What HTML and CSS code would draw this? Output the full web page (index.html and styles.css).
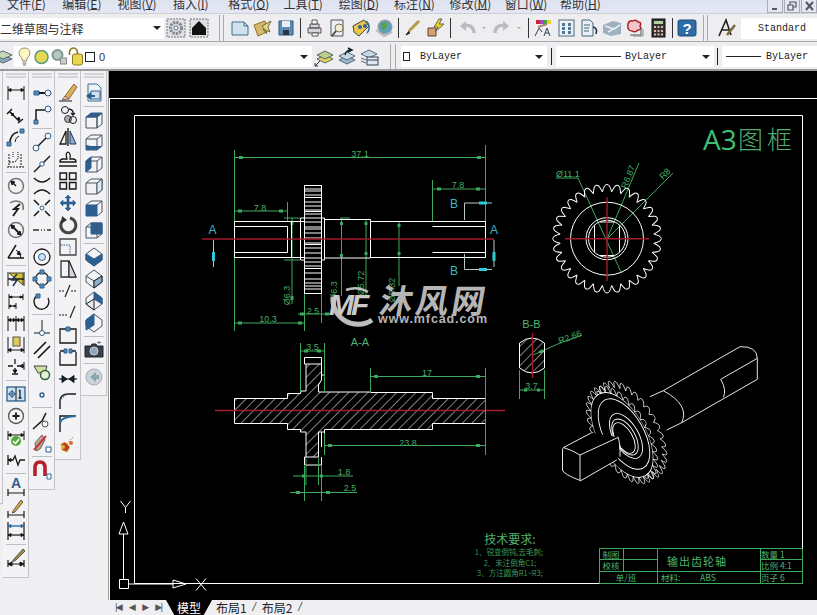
FILE: index.html
```html
<!DOCTYPE html>
<html lang="zh">
<head>
<meta charset="utf-8">
<title>AutoCAD 输出齿轮轴</title>
<link rel="stylesheet" href="styles.css">
</head>
<body>
<svg class="defs" aria-hidden="true">
  <defs>
    <pattern id="hatch" width="6.8" height="6.8" patternUnits="userSpaceOnUse" patternTransform="rotate(45)">
      <line x1="0" y1="0" x2="0" y2="6.8" stroke="#fff" stroke-width="1"/>
    </pattern>
    <path id="tooth" d="M-4.6-46.8Q-3.8-50-2.4-53Q0-55.8 2.4-53Q3.8-50 4.6-46.8"/>
    <g id="teethq">
      <use href="#tooth"/><use href="#tooth" transform="rotate(11.25)"/><use href="#tooth" transform="rotate(22.5)"/><use href="#tooth" transform="rotate(33.75)"/>
      <use href="#tooth" transform="rotate(45)"/><use href="#tooth" transform="rotate(56.25)"/><use href="#tooth" transform="rotate(67.5)"/><use href="#tooth" transform="rotate(78.75)"/>
    </g>
    <g id="teeth">
      <use href="#teethq"/><use href="#teethq" transform="rotate(90)"/><use href="#teethq" transform="rotate(180)"/><use href="#teethq" transform="rotate(270)"/>
    </g>
    <symbol id="grip" viewBox="0 0 20 8"><path d="M0 2H20M0 5H20"/></symbol>
    <symbol id="bar" viewBox="0 0 20 20"><path d="M2 3V17M18 3V17"/></symbol>
  </defs>
</svg>

<header class="menubar">
  <span class="m m1">文件(<u>F</u>)</span><span class="m">编辑(<u>E</u>)</span><span class="m">视图(<u>V</u>)</span><span class="m">插入(<u>I</u>)</span><span class="m">格式(<u>O</u>)</span><span class="m">工具(<u>T</u>)</span><span class="m">绘图(<u>D</u>)</span><span class="m">标注(<u>N</u>)</span><span class="m">修改(<u>M</u>)</span><span class="m">窗口(<u>W</u>)</span><span class="m">帮助(<u>H</u>)</span>
  <div class="winbtns">
    <span class="wb"><svg viewBox="0 0 12 12"><path d="M3 9H8" stroke="#556" stroke-width="2"/></svg></span>
    <span class="wb"><svg viewBox="0 0 12 12"><path d="M2 5H7V10H2ZM4 5V2H10V7H7" fill="none" stroke="#556" stroke-width="1.2"/></svg></span>
    <span class="wb"><svg viewBox="0 0 12 12"><path d="M3 2L10 10M10 2L3 10" stroke="#556" stroke-width="2"/></svg></span>
  </div>
</header>

<div class="toolbar t1">
  <div class="combo c-work"><span class="combo-t">二维草图与注释</span><i class="arrow"></i></div>
  <span class="b"><svg class="ic" viewBox="0 0 20 20"><rect x="1" y="1" width="18" height="18" class="dot"/><circle cx="10" cy="10" r="5.5" class="gr" stroke-width="3"/><circle cx="10" cy="10" r="2" fill="#fff" stroke="#667"/></svg></span>
  <span class="b"><svg class="ic" viewBox="0 0 20 20"><rect x="1" y="1" width="18" height="18" class="dot"/><path d="M3 10L10 3L17 10V17H3Z" fill="#111" stroke="none"/></svg></span>
  <span class="grip"></span>
  <span class="b"><svg class="ic" viewBox="0 0 20 20"><path d="M2 4H14L18 8V17H2Z" fill="#cfe2ee" stroke="#3c6f90"/><path d="M14 4V8H18" stroke="#3c6f90"/></svg></span>
  <span class="b"><svg class="ic" viewBox="0 0 20 20"><path d="M1 7L12 3L14 14L5 18Z" fill="#d9b968" stroke="#8a7430"/><path d="M9 8L18 3L15 9L17 14L12 12Z" fill="#e8d288" stroke="#6f6b3a"/><path d="M10 11L14 16" stroke="#274"/></svg></span>
  <span class="b"><svg class="ic" viewBox="0 0 20 20"><path d="M3 3H17V17H3Z" fill="#5d8db5" stroke="#2f5878"/><path d="M6 3H14V9H6Z" fill="#e8eef4" stroke="none"/><path d="M7 12H13V17H7Z" fill="#24384a" stroke="none"/></svg></span>
  <span class="sep"></span>
  <span class="b"><svg class="ic" viewBox="0 0 20 20"><path d="M5 6H14V10H5ZM3 10H16V15H3Z" fill="#d5d5da" stroke="#555"/><path d="M7 15H13V18H7ZM7 2H12V6H7Z" fill="#fff" stroke="#555"/></svg></span>
  <span class="b"><svg class="ic" viewBox="0 0 20 20"><path d="M3 2H15V18H3Z" fill="#e9f0f5" stroke="#556"/><circle cx="11" cy="10" r="4" fill="#f5efd2" stroke="#775"/><path d="M8 13L4 18" stroke="#543" stroke-width="2"/></svg></span>
  <span class="b"><svg class="ic" viewBox="0 0 20 20"><path d="M2 8L13 2L18 8L8 18L3 14Z" fill="#e8c84a" stroke="#444"/><circle cx="9" cy="9" r="2" fill="#355f9c" stroke="none"/><circle cx="14" cy="8" r="2" fill="#355f9c" stroke="none"/><path d="M15 3C19 6 19 12 16 15" stroke="#3a6a8a" stroke-width="1.5"/></svg></span>
  <span class="b"><svg class="ic" viewBox="0 0 20 20"><circle cx="11" cy="9" r="7" fill="#5f9fbf" stroke="#999"/><path d="M7 5L12 4L14 8L10 12L7 10Z" fill="#5ea04a" stroke="none"/><path d="M2 12L10 18L18 14" stroke="#bbb" stroke-width="2"/></svg></span>
  <span class="sep"></span>
  <span class="b"><svg class="ic" viewBox="0 0 20 20"><path d="M16 3L6 13" stroke="#b89a4a" stroke-width="3"/><path d="M6 13L3 17L7 15" fill="#222" stroke="#222"/></svg></span>
  <span class="b"><svg class="ic" viewBox="0 0 20 20"><path d="M2 10H10V18H2Z" fill="#d9a070" stroke="#543"/><path d="M13 1L8 9H12L9 14L18 6H13L16 1Z" fill="#f0d020" stroke="#665"/></svg></span>
  <span class="sep sp-l"></span>
  <span class="b"><svg class="ic" viewBox="0 0 20 20"><path d="M17 15C17 9 12 6 7 8" stroke="#b9bcc4" stroke-width="3.4"/><path d="M9 3L3 8L9 13Z" fill="#b9bcc4" stroke="none"/></svg></span>
  <span class="bd"><i class="darrow"></i></span>
  <span class="gap2"></span>
  <span class="b"><svg class="ic" viewBox="0 0 20 20"><path d="M3 15C3 9 8 6 13 8" stroke="#b9bcc4" stroke-width="3.4"/><path d="M11 3L17 8L11 13Z" fill="#b9bcc4" stroke="none"/></svg></span>
  <span class="bd"><i class="darrow"></i></span>
  <span class="sep sp-r"></span>
  <span class="b"><svg class="ic" viewBox="0 0 20 20"><path d="M3 2H7V6H3Z" fill="#c23" stroke="none"/><path d="M7 2H11V6H7Z" fill="#a4c" stroke="none"/><path d="M11 2H14V6H11Z" fill="#3a3" stroke="none"/><path d="M14 2H18V6H14Z" fill="#ec3" stroke="none"/><path d="M5 9L14 6" stroke="#a86" stroke-width="2"/><path d="M2 18L6 10L9 14M11 18L14 10L17 18M12 15H16" stroke="#345"/></svg></span>
  <span class="b"><svg class="ic" viewBox="0 0 20 20"><rect x="3" y="2" width="15" height="16" fill="#eef2f5" stroke="#567"/><path d="M6 5H9V8H6ZM12 5H15V8H12ZM6 9H9V12H6ZM12 9H15V12H12ZM6 13H9V16H6ZM12 13H15V16H12Z" fill="#4d7a9c" stroke="none"/></svg></span>
  <span class="b"><svg class="ic" viewBox="0 0 20 20"><path d="M3 2H11L14 5V18H3Z" fill="#e8eff5" stroke="#467"/><path d="M5 7H11M5 10H10M5 13H10" stroke="#467"/><path d="M14 9Q19 10 17 16" stroke="#234" stroke-width="1.6"/></svg></span>
  <span class="b"><svg class="ic" viewBox="0 0 20 20"><path d="M1 7L11 3L19 5V16L9 18L1 15Z" fill="#9cb2c2" stroke="none"/><path d="M3 8L12 11L18 7M6 14L13 10" stroke="#e8eef2" stroke-width="1.6"/></svg></span>
  <span class="b"><svg class="ic" viewBox="0 0 20 20"><path d="M3 6Q4 2 8 3Q11 1 13 4Q17 4 15 8Q17 12 13 12Q10 15 7 13Q2 13 3 6Z" fill="#f2c5ce" stroke="#a22" stroke-width="1.5"/><path d="M16 9V17H5" stroke="#555"/><path d="M18 11V18H8" stroke="#888"/></svg></span>
  <span class="b"><svg class="ic" viewBox="0 0 20 20"><rect x="4" y="1" width="13" height="18" fill="#333" stroke="#111"/><rect x="6" y="3" width="9" height="3" fill="#b4d0a0" stroke="none"/><path d="M6 8H8V10H6ZM9.5 8H11.500V10H9.500ZM13 8H15V10H13ZM6 12H8V14H6ZM9.500 12H11.500V14H9.500ZM13 12H15V14H13ZM6 15.500H8V17.500H6ZM9.500 15.500H11.500V17.500H9.500ZM13 15.500H15V17.500H13Z" fill="#e6b8a0" stroke="none"/></svg></span>
  <span class="sep"></span>
  <span class="b"><svg class="ic" viewBox="0 0 20 20"><rect x="1" y="2" width="18" height="16" rx="2" fill="#2d6ea8" stroke="#1d4a78"/><text class="help" x="10" y="15.500">?</text></svg></span>
  <span class="grip g2"></span>
  <span class="b"><svg class="ic" viewBox="0 0 20 20"><path d="M2 18L9 2L14 17M5 12H13" stroke="#222" stroke-width="1.6"/><path d="M18 7L10 17" stroke="#7d6a3a" stroke-width="2.600"/></svg></span>
  <div class="combo c-style"><span class="mono">Standard</span></div>
</div>

<div class="toolbar t2">
  <span class="b-clip"><svg class="ic layers-clip" viewBox="0 0 20 20"><path d="M1 12L10 8L19 12L10 16Z" fill="#8ea8b8" stroke="#567"/><path d="M1 8L10 4L19 8L10 12Z" fill="#c9d8b0" stroke="#567"/></svg></span>
  <div class="combo c-layer">
    <svg class="ic sm" viewBox="0 0 16 20"><path d="M8 1C3 1 2 5 3 8C4 10 6 11 6 14H10C10 11 12 10 13 8C14 5 13 1 8 1Z" fill="#fff5c0" stroke="#887"/><path d="M6 16H10M6.500 18H9.500" stroke="#666"/></svg>
    <svg class="ic sm" viewBox="0 0 16 20"><circle cx="8" cy="10" r="6.500" fill="#e6d650" stroke="#5a9a86" stroke-width="1.500"/></svg>
    <svg class="ic sm" viewBox="0 0 16 20"><circle cx="7" cy="8" r="5" fill="#b8c4c0" stroke="#7a9a90" stroke-width="2"/><rect x="10" y="11" width="6" height="6" fill="#ccc" stroke="#888"/></svg>
    <svg class="ic sm" viewBox="0 0 16 20"><path d="M2 8V5Q3 1 6 1Q9 1 10 5V8" stroke="#8a7a20" stroke-width="1.600"/><rect x="5" y="7" width="10" height="11" rx="2" fill="#e9d64c" stroke="#887a20"/></svg>
    <i class="swatch"></i><span class="layer-name">0</span><i class="arrow a-end"></i>
  </div>
  <span class="b"><svg class="ic" viewBox="0 0 20 20"><path d="M3 12L11 8L19 12L11 16Z" fill="#e5d25a" stroke="#566"/><path d="M3 8L11 4L19 8L11 12Z" fill="#b8d08a" stroke="#566"/><path d="M1 19L6 14M1 19H4M1 19V16" stroke="#234"/></svg></span>
  <span class="b"><svg class="ic" viewBox="0 0 20 20"><path d="M2 13L10 9L18 13L10 17Z" fill="#9fb9cc" stroke="#567"/><path d="M2 9L10 5L18 9L10 13Z" fill="#c6d8e4" stroke="#567"/><path d="M8 8Q9 3 14 3M11 1L15 3L11 5" stroke="#123" stroke-width="1.500"/></svg></span>
  <span class="b"><svg class="ic" viewBox="0 0 20 20"><path d="M1 7L9 3L17 7L9 11Z" fill="#c6d8e4" stroke="#567"/><path d="M1 11L6 13M1 14L6 16" stroke="#567"/><rect x="7" y="10" width="11" height="8" fill="#dfe9ef" stroke="#345"/><path d="M7 13H18" stroke="#345"/></svg></span>
  <span class="grip g3"></span>
  <div class="combo c-color"><i class="swatch s2"></i><span class="mono bl-t">ByLayer</span><i class="arrow a-end"></i></div>
  <span class="dark d1"></span>
  <div class="combo c-line"><i class="ln ln1"></i><span class="mono bl-t">ByLayer</span><i class="arrow a-end"></i></div>
  <span class="dark d2"></span>
  <div class="combo c-line2"><i class="ln ln2"></i><span class="mono bl-t">ByLayer</span></div>
</div>

<main class="workspace">
  <aside class="dock">
    <div class="col c0"></div>

    <div class="col c1">
      <svg class="grp"><use href="#grip"/></svg>
      <svg class="ic" viewBox="0 0 20 20"><use href="#bar"/><path d="M2 7H18"/><path d="M2 7L5 5.500V8.500ZM18 7L15 5.500V8.500Z" fill="#111"/></svg>
      <svg class="ic" viewBox="0 0 20 20"><path d="M4 7L14 17M1 9L6 4M12 18L17 14" stroke-width="1.500"/><path d="M5 8L8 9L6 11ZM14 15L11 14L13 12Z" fill="#111"/></svg>
      <svg class="ic" viewBox="0 0 20 20"><path d="M4 16Q4 7 12 5" stroke-width="1.500"/><path d="M9 15Q9 11 13 9"/><path d="M1 15H5V19H1ZM14 2H18V6H14Z" class="bl"/></svg>
      <svg class="ic" viewBox="0 0 20 20"><path d="M3 5V18M15 5V18M3 13L9 13L13 8M1 18H19" stroke-dasharray="2 1"/><path d="M7 3V8M12 3V8" stroke-dasharray="1 1"/></svg>
      <span class="hr"></span>
      <svg class="ic" viewBox="0 0 20 20"><circle cx="10" cy="10" r="7.500" stroke-width="1.500" stroke="#777"/><path d="M10 10L5 5" stroke-width="1.500"/><path d="M5 5L9 6L6 9Z" fill="#123"/></svg>
      <svg class="ic" viewBox="0 0 20 20"><path d="M4 5Q10 1 16 5Q18 8 17 12" stroke="#777" stroke-width="1.500"/><path d="M14 6L8 11L12 11L7 18" stroke-width="1.800"/></svg>
      <svg class="ic" viewBox="0 0 20 20"><circle cx="10" cy="10" r="7.500" stroke-width="1.500" stroke="#777"/><path d="M5 5L15 15" stroke-width="1.800"/><path d="M5 5L9 6L6 9ZM15 15L11 14L14 11Z" fill="#123"/></svg>
      <svg class="ic" viewBox="0 0 20 20"><path d="M2 16H18M2 16L10 3" stroke-width="1.500"/><path d="M10 8Q15 11 15 16"/><path d="M13 9L15 13L11 12Z" fill="#123"/></svg>
      <span class="hr"></span>
      <svg class="ic" viewBox="0 0 20 20"><use href="#bar"/><path d="M3 4L17 16V4Z" fill="#d8c42c" stroke="#443"/><path d="M2 10H18" stroke-width="1.500"/><path d="M11 5L6 11L11 11L7 17" stroke="#235" stroke-width="1.500"/></svg>
      <svg class="ic" viewBox="0 0 20 20"><path d="M3 3V18M17 3V9M10 12V18M3 6H17M3 15H10"/><path d="M3 6L6 5V7ZM17 6L14 5V7ZM3 15L5 14V16ZM10 15L8 14V16Z" fill="#111"/></svg>
      <svg class="ic" viewBox="0 0 20 20"><path d="M2 3V18M10 3V18M18 3V18M2 7H18"/><path d="M2 7L5 5.500V8.500ZM10 7L7 5.500V8.500ZM10 7L13 5.500V8.500ZM18 7L15 5.500V8.500Z" fill="#111"/></svg>
      <svg class="ic" viewBox="0 0 20 20"><rect x="7" y="2" width="7" height="9" fill="#e2c95c" stroke="#554"/><path d="M2 2V18M18 2V18M2 15H18"/><path d="M2 15L5 13.500V16.500ZM18 15L15 13.500V16.500Z" fill="#111"/></svg>
      <svg class="ic" viewBox="0 0 20 20"><path d="M9 2V7M9 11V16M6 17H12M2 9H7M11 9H18" stroke-width="1.300"/><path d="M18 5V13"/><path d="M14 9L17 7V11Z" fill="#235"/><path d="M9 16L7 13H11Z" fill="#111"/></svg>
      <span class="hr"></span>
      <svg class="ic" viewBox="0 0 20 20"><rect x="1" y="3" width="18" height="14" fill="#cfe0ee" stroke="#2c5f90" stroke-width="1.300"/><path d="M10 3V17"/><circle cx="6" cy="10" r="2.500" stroke="#2c5f90"/><path d="M6 6V14M2 10H10" stroke="#2c5f90"/><path d="M14 6V14M12.500 14H15.500M13 7L14 6" stroke="#123" stroke-width="1.300"/></svg>
      <svg class="ic" viewBox="0 0 20 20"><circle cx="10" cy="10" r="7.500" stroke="#555" stroke-width="1.300"/><path d="M6.500 10H13.500M10 6.500V13.500" stroke-width="1.800"/></svg>
      <svg class="ic" viewBox="0 0 20 20"><path d="M2 3V12M18 3V12M2 7H18"/><path d="M2 7L5 5.500V8.500ZM18 7L15 5.500V8.500Z" fill="#111"/><circle cx="10" cy="13" r="5" fill="#55a83a" stroke="none"/><path d="M7 13L9.500 15.500L13 11" stroke="#fff" stroke-width="1.500"/></svg>
      <svg class="ic" viewBox="0 0 20 20"><path d="M2 5V15M2 10H7L9 6L12 15L14 10H19" stroke-width="1.300"/><path d="M2 10L5 8.500V11.500Z" fill="#111"/></svg>
      <span class="hr"></span>
      <svg class="ic" viewBox="0 0 20 20"><text class="dimA" x="10" y="11">A</text><path d="M2 12V19M18 12V19M2 16H18" stroke-width="1.200"/></svg>
      <svg class="ic" viewBox="0 0 20 20"><path d="M15 1L7 12L6 14L9 13L17 3Z" fill="#cdb03a" stroke="#655"/><path d="M2 12V19M18 12V19M2 16H18" stroke-width="1.200"/></svg>
      <svg class="ic" viewBox="0 0 20 20"><path d="M2 1V19M18 1V19" stroke-width="1.200"/><path d="M2 5H18" stroke="#2c6ea0" stroke-width="1.400"/><path d="M2 14H18" stroke-width="1.200"/><path d="M2 5L5 3.500V6.500ZM18 5L15 3.500V6.500Z" fill="#2c6ea0" stroke="#2c6ea0"/><path d="M2 14L5 12.500V15.500ZM18 14L15 12.500V15.500Z" fill="#111"/></svg>
      <span class="hr"></span>
      <svg class="ic" viewBox="0 0 20 20"><path d="M17 1L8 11L6 14L10 12L19 3Z" fill="#a88a4a" stroke="#554"/><path d="M2 12V19M18 12V19M2 16H18" stroke-width="1.200"/><path d="M2 16L6 14V18ZM18 16L14 14V18Z" fill="#111"/></svg>
    </div>

    <div class="col c2">
      <svg class="grp"><use href="#grip"/></svg>
      <svg class="ic" viewBox="0 0 20 20"><path d="M2 8H7V12H2Z" class="bl"/><path d="M7 10H13" stroke-width="2"/><circle cx="16" cy="10" r="3" stroke="#2c5f90"/></svg>
      <svg class="ic" viewBox="0 0 20 20"><path d="M2 15H6V19H2Z" class="bl"/><path d="M4 15V5H13" stroke-width="1.500"/><circle cx="16" cy="4" r="3" stroke="#2c5f90"/></svg>
      <span class="hr"></span>
      <svg class="ic" viewBox="0 0 20 20"><circle cx="4" cy="16" r="3" stroke="#2c5f90"/><circle cx="16" cy="4" r="3" stroke="#2c5f90"/><path d="M6 14L14 6" stroke-width="1.500"/></svg>
      <svg class="ic" viewBox="0 0 20 20"><path d="M2 18L18 2" stroke-width="1.500"/><circle cx="10" cy="10" r="2.200" stroke="#2c5f90" fill="#fff"/></svg>
      <svg class="ic" viewBox="0 0 20 20"><path d="M2 2Q10 10 18 2M2 18Q10 10 18 18" stroke-width="1.600"/></svg>
      <svg class="ic" viewBox="0 0 20 20"><path d="M2 2L7 7M13 13L18 18M18 2L13 7M7 13L2 18" stroke-width="1.600"/><circle cx="10" cy="10" r="2" stroke="#2c5f90"/></svg>
      <svg class="ic" viewBox="0 0 20 20"><path d="M1 10H7M9 10H10M12 10H13M15 10H19" stroke-width="1.600" stroke="#333"/></svg>
      <span class="hr"></span>
      <svg class="ic" viewBox="0 0 20 20"><circle cx="10" cy="10" r="8" stroke-width="1.300" fill="#f8f8f8"/><circle cx="10" cy="10" r="3.500" stroke="#2c6ea0" fill="#cfe0ee"/></svg>
      <svg class="ic" viewBox="0 0 20 20"><circle cx="10" cy="10" r="6.500" stroke-width="1.300"/><path d="M8 1H12V5H8ZM8 15H12V19H8ZM1 8H5V12H1ZM15 8H19V12H15Z" fill="#5a8ab8" stroke="#2c5f90"/></svg>
      <svg class="ic" viewBox="0 0 20 20"><path d="M6 4A7.500 7.500 0 1 0 16 7" stroke-width="1.400"/><path d="M4 3H8V7H4Z" fill="#5a8ab8" stroke="#2c5f90"/></svg>
      <span class="hr"></span>
      <svg class="ic" viewBox="0 0 20 20"><path d="M10 2V15M2 15H18"/><circle cx="10" cy="15" r="2.500" stroke="#2c5f90" fill="#fff"/></svg>
      <svg class="ic" viewBox="0 0 20 20"><path d="M2 14L14 2M6 18L18 6" stroke-width="1.700"/></svg>
      <svg class="ic" viewBox="0 0 20 20"><path d="M2 4H15L13 11H6Z" fill="#cfe0a0" stroke="#444"/><circle cx="13" cy="13" r="4.500" stroke="#2c6040" stroke-width="1.500" fill="#e7f0d0"/></svg>
      <svg class="ic" viewBox="0 0 20 20"><circle cx="10" cy="11" r="2" stroke="#2c5f90" stroke-width="1.300"/></svg>
      <span class="hr"></span>
      <svg class="ic" viewBox="0 0 20 20"><path d="M1 18L11 9M14 2L10 10" stroke-width="1.600"/><circle cx="13" cy="13" r="3" stroke="#555"/></svg>
      <svg class="ic" viewBox="0 0 20 20"><path d="M3 10L10 2L13 7L8 16L4 18Z" fill="#b8a8a0" stroke="#665"/><path d="M2 17L14 3" stroke="#c33" stroke-width="2"/><path d="M14 14H19V19H14Z" fill="#fff" stroke="#2c5f90"/></svg>
      <span class="hr"></span>
      <svg class="ic" viewBox="0 0 20 20"><path d="M3 16V8Q3 2 8 2Q13 2 13 8V16" stroke="#b5202c" stroke-width="3.600"/><path d="M15 14H19V19H15Z" stroke="#2c6ea0" fill="#fff"/></svg>
    </div>

    <div class="col c3">
      <svg class="grp"><use href="#grip"/></svg>
      <svg class="ic" viewBox="0 0 20 20"><path d="M16 1L7 13L11 16L19 4Z" fill="#d8b24a" stroke="#866"/><path d="M7 13L4 17L11 16Z" fill="#e8c0b0" stroke="#866"/><path d="M1 18H14"/></svg>
      <svg class="ic" viewBox="0 0 20 20"><circle cx="7" cy="5" r="3.500"/><circle cx="10" cy="14" r="3.500" fill="#aaa" stroke="#444"/><circle cx="15" cy="15" r="3.500"/><path d="M11 4Q16 5 15 9M13 8L15 10L17 8" stroke="#123" stroke-width="1.400"/></svg>
      <svg class="ic" viewBox="0 0 20 20"><path d="M10 1V19" stroke-width="1.400"/><path d="M8 4L2 17H8Z" stroke-width="1.300"/><path d="M12 4L18 17H12Z" fill="#8ab0d0" stroke="#235"/></svg>
      <svg class="ic" viewBox="0 0 20 20"><path d="M2 13Q2 10 5 10H9Q7 4 10 3Q13 4 12 10H15Q18 10 18 13H2Z" stroke-width="1.300"/><path d="M1 17H19" stroke-width="1.500"/></svg>
      <svg class="ic" viewBox="0 0 20 20"><path d="M2 2H8.500V8.500H2ZM11.500 2H18V8.500H11.500ZM2 11.500H8.500V18H2ZM11.500 11.500H18V18H11.500Z" stroke-width="1.400"/></svg>
      <svg class="ic" viewBox="0 0 20 20"><path d="M10 2L13 5H11V9H15V7L18 10L15 13V11H11V15H13L10 18L7 15H9V11H5V13L2 10L5 7V9H9V5H7Z" fill="#2c5f90" stroke="#2c5f90" stroke-width=".6"/></svg>
      <svg class="ic" viewBox="0 0 20 20"><path d="M12 3A7.500 7.500 0 1 1 5 5" stroke="#444" stroke-width="3"/><path d="M4 1L9 5L3 9Z" fill="#333" stroke="none"/></svg>
      <svg class="ic" viewBox="0 0 20 20"><path d="M2 2H18V18H2Z" stroke="#444" stroke-width="1.300"/><path d="M3 8H12V17" stroke="#2c5f90" stroke-dasharray="1.500 1"/></svg>
      <svg class="ic" viewBox="0 0 20 20"><path d="M3 2V18H11V2ZM11 2L18 18H11" stroke="#333" stroke-width="1.300"/><path d="M11 2L18 18H11Z" fill="#cfd8e0"/></svg>
      <svg class="ic" viewBox="0 0 20 20"><path d="M1 10H7M13 10H19" stroke-dasharray="2 1"/><path d="M12 4L7 16" stroke="#222" stroke-width="1.200"/></svg>
      <svg class="ic" viewBox="0 0 20 20"><path d="M1 12H10" stroke-dasharray="2 1"/><path d="M17 3L12 15" stroke="#222" stroke-width="1.200"/></svg>
      <svg class="ic" viewBox="0 0 20 20"><path d="M2 4H18V18H2Z" stroke-width="1.300"/><path d="M8 2H12V6H8Z" fill="#5a8ab8" stroke="#2c5f90"/></svg>
      <svg class="ic" viewBox="0 0 20 20"><path d="M2 5V18H18V5" stroke-width="1.300"/><path d="M2 4H7M13 4H18" stroke-width="1.300"/><path d="M6 2H9V6H6ZM11 2H14V6H11Z" fill="#5a8ab8" stroke="#2c5f90"/></svg>
      <svg class="ic" viewBox="0 0 20 20"><path d="M1 10H19" stroke-width="1.200"/><path d="M9 10L4 6.500V13.500ZM11 10L16 6.500V13.500Z" fill="#123"/></svg>
      <svg class="ic" viewBox="0 0 20 20"><path d="M2 18V9Q3 3 10 3H18" stroke-width="1.400"/><path d="M3 8Q5 5 10 3" stroke="#2c6ea0" stroke-dasharray="1.500 1" stroke-width="1.500"/></svg>
      <svg class="ic" viewBox="0 0 20 20"><path d="M2 19V3H18" stroke-width="1.400"/><path d="M2 10Q3 4 18 3" stroke="#2c6ea0" stroke-width="2"/></svg>
      <svg class="ic" viewBox="0 0 20 20"><path d="M15 2L9 9" stroke="#999" stroke-dasharray="1.500 1"/><path d="M3 9L7 7L12 12L9 17L4 15Z" fill="#b5421e" stroke="#e8b040"/><circle cx="5" cy="12" r="2" fill="#e8b040" stroke="none"/><circle cx="13" cy="8" r="2" fill="#d86a2e" stroke="none"/></svg>
    </div>

    <div class="col c4">
      <svg class="grp"><use href="#grip"/></svg>
      <svg class="ic" viewBox="0 0 20 20"><path d="M4 1H13L17 5V18H4Z" fill="#eef3f6" stroke="#3c6f90"/><path d="M7 8H16V16H7Z" fill="#cfe0ee" stroke="#2c5f90"/><path d="M2 13L7 9V12H11V14H7V17Z" fill="#2c5f90" stroke="none"/></svg>
      <span class="hr"></span>
      <svg class="ic" viewBox="0 0 20 20"><path d="M2 7L7 3H18L13 7Z" fill="#2c5f90" stroke="#2c5f90"/><path d="M2 7H13V18H2ZM13 7L18 3V14L13 18Z" stroke="#456"/></svg>
      <svg class="ic" viewBox="0 0 20 20"><path d="M2 7L7 3H18V14L13 18H2Z" stroke="#456"/><path d="M2 7H13V18M13 7L18 3"  stroke="#456"/><path d="M2 13L7 14H18L13 18H2Z" fill="#2c5f90" stroke="none"/></svg>
      <svg class="ic" viewBox="0 0 20 20"><path d="M2 7L7 3H18V14L13 18H2Z" stroke="#456"/><path d="M2 7L7 3V14L2 18Z" fill="#2c5f90" stroke="#2c5f90"/><path d="M2 7H13V18M13 7L18 3" stroke="#456"/></svg>
      <svg class="ic" viewBox="0 0 20 20"><path d="M2 7L7 3H18V14L13 18H2Z" stroke="#456"/><path d="M2 7H13V18M13 7L18 3" stroke="#456"/><path d="M13 7L18 3V14L13 18Z" fill="#dfe9f2" stroke="#456"/></svg>
      <svg class="ic" viewBox="0 0 20 20"><path d="M2 7H13V18H2Z" fill="#2c5f90" stroke="#2c5f90"/><path d="M2 7L7 3H18V14L13 18M13 7L18 3" stroke="#456"/></svg>
      <svg class="ic" viewBox="0 0 20 20"><path d="M2 7L7 3H18V14L13 18H2Z" stroke="#456"/><path d="M7 3H18V14H7Z" fill="#2c5f90" stroke="#2c5f90"/><path d="M2 7H13V18" stroke="#456"/></svg>
      <span class="hr"></span>
      <svg class="ic" viewBox="0 0 20 20"><path d="M10 1L18 7V13L10 19L2 13V7Z" stroke="#456"/><path d="M2 7L10 12L18 7V13L10 19L2 13Z" fill="#2c5f90" stroke="#2c5f90"/></svg>
      <svg class="ic" viewBox="0 0 20 20"><path d="M10 1L18 7V13L10 19L2 13V7Z" stroke="#456"/><path d="M2 7L10 12L18 7M10 12V19" stroke="#456"/><path d="M10 12L18 7V13L10 19Z" fill="#8ab0d0"/></svg>
      <svg class="ic" viewBox="0 0 20 20"><path d="M10 1L18 7V13L10 19L2 13V7Z" stroke="#456"/><path d="M10 1L18 7V13L10 8Z" fill="#2c5f90" stroke="#2c5f90"/><path d="M2 13L10 8V19Z" fill="#dfe9f2"/></svg>
      <svg class="ic" viewBox="0 0 20 20"><path d="M10 1L18 7V13L10 19L2 13V7Z" stroke="#456"/><path d="M2 7L10 1V12L2 17Z" fill="#2c5f90" stroke="#2c5f90"/></svg>
      <span class="hr"></span>
      <svg class="ic" viewBox="0 0 20 20"><path d="M1 6H7L8 4H12L13 6H19V17H1Z" fill="#3a4048" stroke="#223"/><circle cx="10" cy="11" r="4" fill="#8ea4b8" stroke="#ccd"/><path d="M15 1L15 4M13 2.500H17" stroke="#778"/></svg>
      <span class="hr"></span>
      <svg class="ic" viewBox="0 0 20 20"><circle cx="10" cy="10" r="8" fill="#ccd4d8" stroke="#aab"/><path d="M12 5V15L6 10Z" fill="#8ca4b0" stroke="none"/><path d="M11 8H15V12H11Z" fill="#8ca4b0" stroke="none"/></svg>
    </div>
  </aside>

  <section class="viewport">
    <svg class="drawing" viewBox="109 71 708 529" preserveAspectRatio="none">
      <!-- paper and frame -->
      <path class="w" d="M109.500 99V600M109 98.500H817M134.500 115.500H802.500V583.500H134.500Z"/>

      <!-- front view -->
      <g class="dim">
        <path d="M234.500 150V331M485.500 145V228M234 157.500H485M287.500 202V222M234 211H288M432.500 180V222M432 189H485"/>
        <path d="M284 218H300M284 260H300M292 218V304M304.500 293V331M234 323H304M321.500 293V323M298 314H332"/>
        <path d="M341.500 218V296M366 219V298M399 221V286M340 218H350"/>
        <path d="M578 178H556M578 178L621 272M607 239L639 163M607 239L673 173"/>
      </g>
      <path class="ar" d="M239 157.500H243M477 157.500H481M238 211H242M279 211H283M437 189H441M476 189H480M238 323H242M298 323H302M300 314H304M325 314H329M292 221V225M292 300V296M341.500 222V225M341.500 254V257M366 222V225M366 252V255M399 224V227M399 252V255"/>
      <g class="w">
        <path d="M234.500 221.500H304M234.500 257.500H304M234.500 221.500V257.500M234.500 226.500H287.500V252.500H234.500M291.500 221.500V257.500"/>
        <path d="M300.500 218V260H304.500V218ZM321.500 218V260H324.500V218ZM324.500 219.500H370.500V258H324.500M370.500 221.500H485.500V257.500H370.500M432.500 226.500H485.500V252.500H432.500M485.500 221.500V257.500"/>
        <rect x="304.500" y="185.500" width="17" height="108"/>
        <path d="M304 189H322M304 191H322M304 195H322M304 197.500H322M304 202H322M304 206H322M304 210H322M304 211.500H322M304 214H322M304 218H322M304 222H322M304 227H322M304 229H322M304 233H322M304 238H322M304 243H322M304 244.500H322M304 248H322M304 253H322M304 258H322M304 262H322M304 266H322M304 268.500H322M304 273H322M304 279H322M304 283H322M304 286H322M304 289H322"/>
      </g>
      <path class="rd" d="M202 239H494"/>
      <g class="cy">
        <path d="M464.500 220V203H492M464.500 254V269.500H492M213.500 240V267M494 240V267"/>
      </g>
      <path class="car" d="M479 203H487M479 269.500H487M213.500 252V261M494 252V261"/>
      <text class="t-cy" x="212.500" y="234">A</text>
      <text class="t-cy" x="494" y="234">A</text>
      <text class="t-cy" x="454" y="208">B</text>
      <text class="t-cy" x="454" y="275">B</text>
      <text class="t-d" x="360" y="157">37.1</text>
      <text class="t-d" x="260" y="211">7.8</text>
      <text class="t-d" x="458" y="188">7.8</text>
      <text class="t-d" x="268" y="322">10.3</text>
      <text class="t-d" x="313" y="314">2.5</text>
      <text class="t-d" transform="translate(290 295.500) rotate(-90)">Ø6.3</text>
      <text class="t-d" transform="translate(337 291) rotate(-90)">Ø6.3</text>
      <text class="t-d" transform="translate(364 283) rotate(-90)">Ø5.72</text>
      <text class="t-d" transform="translate(395 290) rotate(-90)">Ø5.32</text>
      <text class="t-h" x="360" y="346">A-A</text>

      <!-- watermark -->
      <g class="wm">
        <path class="wm-arc" d="M333 297A25 25 0 0 0 372 320"/>
        <path class="wm-arc thin" d="M346 290A25 25 0 0 1 368 292"/>
        <text class="wm-mf" x="329" y="315">MF</text>
        <text class="wm-cn" transform="translate(378 313) skewX(-10)">沐风网</text>
        <text class="wm-url" x="378" y="323" textLength="109">www.mfcad.com</text>
      </g>

      <!-- section A-A -->
      <path class="hatched" d="M234.500 398.500H287.500V393.500H300.500V391H306V364H321.500V380L318.500 385V392H370V392.500H432.500V398.500H485.500V423.500H432.500V429.500H324.500V432H318.500V457H306V432H300.500V429.500H287.500V423.500H234.500Z"/>
      <path class="w" d="M304.500 357.500H321.500V364M304.500 357.500V364H306M304.500 465H321.500V457M304.500 465V457H306M321.500 380V375H324.500V392M321.500 432V447M324.500 432V447"/>
      <path class="rd" d="M215 410.500H505"/>
      <g class="dim">
        <path d="M300.500 343V392M324.500 343V392M300 351H325M370.500 368V393M485.500 368V455M370 376.500H485M324.500 433V455M324 445.500H485"/>
        <path d="M293 476H353M306 458V485M318.500 458V485M290 492.500H357M304.500 466V501M321.500 466V501"/>
        <path d="M519.500 370V399M544.500 370V399M519 390H545M533 355L560 343L582 335"/>
      </g>
      <path class="ar" d="M304 351H308M317 351H321M374 376.500H378M476 376.500H480M328 445.500H332M476 445.500H480M302 476H305M320 476H323M296 492.500H300M326 492.500H330M524 390H527M537 390H540M539 352.500L543 350.500"/>
      <text class="t-d" x="312.500" y="350">3.5</text>
      <text class="t-d" x="427" y="376">17</text>
      <text class="t-d" x="408" y="446">23.8</text>
      <text class="t-d" x="344" y="475">1.8</text>
      <text class="t-d" x="350" y="491">2.5</text>
      <text class="t-d" x="531.500" y="389">3.7</text>

      <!-- section B-B -->
      <text class="t-h" x="531.500" y="328">B-B</text>
      <path class="hatched" d="M519.500 343Q532 333 544.500 343V368Q532 378 519.500 368Z"/>
      <path class="rd" d="M532.500 333V378"/>
      <text class="t-d" transform="translate(571 340) rotate(-20)">R2.66</text>

      <!-- gear end view -->
      <g class="w thin-w">
        <use href="#teeth" transform="translate(607 238.700)"/>
        <circle cx="607" cy="238.700" r="36.500"/>
        <circle cx="607" cy="238.700" r="21"/>
        <circle cx="607" cy="238.700" r="18.500"/>
        <path d="M594.500 225.500V252M619.500 225.500V252M600 222H614M600 255.500H614"/>
      </g>
      <path class="rd" d="M565 238.700H649M607 197V281"/>
      <text class="t-d left" x="556" y="177">Ø11.1</text>
      <text class="t-d" transform="translate(631 178) rotate(-68)">R6.87</text>
      <text class="t-d" transform="translate(667 176) rotate(-45)">R8</text>

      <!-- isometric view -->
      <g class="iso">
        <path class="fillb" d="M663.300 390.700L740 346.700Q757 346 757.300 358.300V379.300L681.700 422.700Q690 405 663.300 390.700Z"/>
        <path d="M757.300 358.300L720.700 379.300Q727 390 723.300 397.300M650 396.700L663.300 390.700M666.700 430L681.700 422.700"/>
        <use href="#teeth" transform="translate(631 430) rotate(-30) scale(.5 1)"/>
        <g transform="translate(622 435) rotate(-30) scale(.5 1)">
          <circle class="fillb" r="47" stroke="none"/>
          <use href="#teeth"/>
        </g>
        <ellipse class="fillb" cx="624" cy="434" rx="19.500" ry="39" transform="rotate(-30 624 434)"/>
        <ellipse cx="626" cy="436" rx="12.500" ry="25" transform="rotate(-30 626 436)"/>
        <ellipse cx="625" cy="437" rx="10" ry="20" transform="rotate(-30 625 437)"/>
        <ellipse cx="624" cy="438" rx="8.500" ry="17" transform="rotate(-30 624 438)"/>
        <path class="nofill" d="M563.500 447.500L591.700 432.700L618.300 437.300L620 456.700L616.700 460L580.700 480.700Q563 474 562.500 470V451Q562 449 563.500 447.500Z"/>
        <path d="M563.500 447.500L591.700 432.700M616.700 460L580.700 480.700Q563 474 562.500 470V451Q562 449 563.500 447.500Q572 450 580 455V480.700M580 455L618.300 437.300Q621 445 620 456.700"/>
      </g>

      <!-- UCS -->
      <g class="w">
        <path d="M123.500 579V534M119.500 579.500H128.500V588.500H119.500ZM128.500 584H173"/>
        <path d="M123.500 522L128 534H119ZM173 580V588L186 584Z"/>
        <path d="M120.500 501L125.500 507.500L130.500 501M125.500 507.500V513M196 578.500L206 590.500M206 578.500L196 590.500"/>
      </g>

      <!-- titles -->
      <text class="t-big" x="703" y="150">A3</text>
      <text class="t-big cn" x="738" y="149">图框</text>
      <text class="t-req" x="510" y="544">技术要求:</text>
      <text class="t-sm" x="509" y="555">1、锐变倒钝,去毛刺;</text>
      <text class="t-sm" x="510" y="565.500">2、未注倒角C1;</text>
      <text class="t-sm" x="510" y="576">3、方注圆角R1~R3;</text>

      <!-- title block -->
      <path class="tb" d="M599.500 548.500H802.500V583.500H599.500ZM599.500 559.500H657M599.500 571.500H802.500M760.500 559.500H802.500M623.500 548.500V571.500M657.500 548.500V583.500M760.500 548.500V583.500"/>
      <text class="t-tb" x="611" y="558">制图</text>
      <text class="t-tb" x="611" y="569">校核</text>
      <text class="t-tb" x="626" y="581">单/班</text>
      <text class="t-ttl" x="697" y="566">输出齿轮轴</text>
      <text class="t-tb left" x="661" y="581">材料:</text>
      <text class="t-tb left" x="700" y="581">ABS</text>
      <text class="t-tb left" x="761" y="557.500">数量 1</text>
      <text class="t-tb left" x="761" y="569">比例 4:1</text>
      <text class="t-tb left" x="761" y="581">页子 6</text>
    </svg>
  </section>
</main>

<footer class="tabs">
  <span class="nav"><i class="nb">|◀</i><i class="nb">◀</i><i class="nb">▶</i><i class="nb">▶|</i></span>
  <span class="tab active">模型</span>
  <span class="tab">布局1</span><span class="slash">/</span>
  <span class="tab">布局2</span><span class="slash">/</span>
</footer>
</body>
</html>
```

FILE: styles.css
```css
* { box-sizing: border-box; }
html, body { margin: 0; padding: 0; }
body {
  width: 817px;
  height: 615px;
  overflow: hidden;
  background: #efeef0;
  font-family: "Noto Sans CJK SC", "Liberation Sans", sans-serif;
  color: #222;
  display: flex;
  flex-direction: column;
}
.defs { width: 0; height: 0; position: absolute; }
i { font-style: normal; }

/* Menu */
.menubar {
  height: 13px;
  flex: none;
  display: flex;
  align-items: flex-start;
  overflow: hidden;
  background: linear-gradient(#dfe3f0, #e4e7f3);
  font-size: 12px;
  line-height: 7px;
  padding-left: 7px;
  color: #333;
}
.m { width: 54px; margin-right: 1.300px; white-space: nowrap; }
.m u { text-underline-offset: 0; }
.winbtns { margin-left: auto; display: flex; gap: 1px; }
.wb { width: 16px; height: 13px; border: 1px solid #aab; border-top: 0; background: #e4e7ef; }
.wb svg { display: block; width: 12px; height: 12px; margin: 0 auto; }

/* Toolbars */
.toolbar {
  flex: none;
  display: flex;
  align-items: center;
  background: #eeedf0;
  overflow: hidden;
}
.t1 { height: 29px; padding-top: 1px; border-top: 1px solid #cfd0d6; border-bottom: 1px solid #a9a9ad; }
.t2 { height: 29px; padding-top: 2px; border-bottom: 2px solid #9a9a9e; }
.ic { width: 20px; height: 20px; flex: none; display: block; fill: none; stroke: #1a1a1a; stroke-width: 1; }
.b { width: 23px; height: 23px; display: flex; align-items: center; justify-content: center; flex: none; }
.bd { width: 10px; height: 23px; display: flex; align-items: center; justify-content: center; flex: none; }
.gap2 { width: 2px; flex: none; }
.dot { fill: #dfe0e4; stroke: #777; stroke-dasharray: 2 1; }
.gr { fill: none; stroke: #7a8690; stroke-dasharray: 2.200 1; }
.sep { width: 6px; height: 24px; flex: none; background: linear-gradient(#333, #333) center / 1px 20px no-repeat; }
.sp-l { margin-right: 2.500px; }
.sp-r { margin-left: 1.500px; }
.grip {
  width: 18px;
  height: 26px;
  flex: none;
  background:
    linear-gradient(#aaa, #aaa) 9px 0 / 1px 26px no-repeat,
    linear-gradient(#aaa, #aaa) 13px 0 / 1px 26px no-repeat;
}
.g2 { width: 17px; background-position: 5px 0, 9px 0; }
.g3 { width: 20px; background-position: 9px 0, 14px 0; }
.combo {
  background: #fff;
  height: 21px;
  display: flex;
  align-items: center;
  flex: none;
  font-size: 10px;
}
.c-work { width: 164px; font-size: 12px; padding-right: 3px; }
.combo-t { flex: 1; letter-spacing: -.1px; color: #333; }
.c-style { width: 78px; margin-left: 3px; padding-left: 17px; }
.mono { font-family: "Liberation Mono", "DejaVu Sans Mono", monospace; font-size: 10px; color: #222; }
.arrow {
  width: 0;
  height: 0;
  flex: none;
  border-left: 4px solid transparent;
  border-right: 4px solid transparent;
  border-top: 4px solid #222;
}
.a-end { margin-left: auto; margin-right: 4px; }
.darrow { width: 0; height: 0; border-left: 2px solid transparent; border-right: 2px solid transparent; border-top: 2px solid #aaa; }
.b-clip { width: 14px; height: 24px; overflow: hidden; display: block; flex: none; }
.layers-clip { margin: 2px 0 0 -7px; }
.c-layer { width: 298px; padding-left: 2px; }
.sm { width: 17px; height: 20px; }
.swatch { width: 10px; height: 10px; flex: none; border: 1px solid #222; background: #fff; margin-left: 1px; }
.layer-name { font-size: 11px; margin-left: 4px; color: #333; font-family: "Liberation Sans", sans-serif; }
.c-color { width: 146px; padding-left: 2px; }
.s2 { width: 7px; height: 9px; margin: 0; }
.bl-t { margin-left: 10px; }
.dark { width: 1px; height: 17px; background: #222; flex: none; }
.d1 { margin: 0 4px; }
.d2 { margin: 0 4px 0 3px; }
.c-line { width: 158px; padding-left: 4px; }
.c-line2 { flex: 1; padding-left: 4px; }
.ln { height: 1px; background: #222; flex: none; }
.ln1 { width: 61px; margin-right: -6px; }
.ln2 { width: 35px; margin-right: -5px; }

/* Work area */
.workspace { flex: 1; min-height: 0; display: flex; }
.dock { width: 109px; flex: none; display: flex; align-items: flex-start; border-right: 1px solid #999; }
.col {
  display: flex;
  flex-direction: column;
  align-items: center;
  background: #f3f2f4;
  border-right: 1px solid #c4c4c8;
  border-bottom: 1px solid #c4c4c8;
  padding-top: 1px;
  flex: none;
}
.col .ic { margin: 1px 0; }
.c0 { width: 3px; height: 433px; }
.c1 { width: 26px; height: 507px; }
.c2 { width: 26px; height: 419px; }
.c3 { width: 26px; height: 389px; }
.c4 { width: 26px; height: 325px; }
.grp { width: 20px; height: 8px; margin: 0 0 2px; display: block; fill: none; stroke: #b4b4b8; }
.hr { width: 20px; height: 1px; background: #bfbfc3; margin: 2px 0; flex: none; }
.bl { fill: #5a8ab8; stroke: #2c5f90; }
.dimA { font: 700 14px "Liberation Sans", sans-serif; fill: #2c5f90; stroke: none; text-anchor: middle; }
.help { font: 700 15px "Liberation Sans", sans-serif; fill: #fff; stroke: none; text-anchor: middle; }

.viewport { flex: 1; min-width: 0; background: #000; }
.drawing { display: block; width: 100%; height: 100%; background: #000; }

.w, .w path, .w rect { fill: none; stroke: #fff; stroke-width: 1; }
#tooth { fill: none; }
.thin-w use, .iso use { stroke: #fff; fill: none; }
.thin-w circle { fill: none; stroke: #fff; }
.dim { fill: none; stroke: #3da95f; stroke-width: 1; }
.ar { fill: none; stroke: #3da95f; stroke-width: 3; }
.rd { fill: none; stroke: #a31a2c; stroke-width: 1.400; }
.cy { fill: none; stroke: #b8c8c8; stroke-width: 1; }
.car { fill: none; stroke: #2fc9d8; stroke-width: 3; }
.hatched { fill: url(#hatch); stroke: #fff; stroke-width: 1; }
.iso { fill: none; stroke: #fff; stroke-width: .9; }
.fillb { fill: #000; stroke: #fff; }
.nofill { fill: #000; stroke: none; }

svg text { font-family: "Liberation Sans", "Noto Sans CJK SC", sans-serif; text-anchor: middle; }
.t-cy { font-size: 12px; fill: #38b9c6; }
.t-d { font-size: 9px; fill: #45ad66; }
.left { text-anchor: start; }
.t-h { font-size: 11px; fill: #4fb36f; }
.t-big { font-family: "Open Sans", sans-serif; font-size: 28px; fill: #3fbf74; text-anchor: start; }
.cn { font-family: "Noto Sans CJK SC", sans-serif; font-size: 25px; font-weight: 300; fill: #4fae70; letter-spacing: 4px; }
svg .t-req { font-family: "Noto Sans CJK SC", sans-serif; font-size: 12px; fill: #4fb36f; }
svg .t-sm { font-family: "Noto Sans CJK SC", sans-serif; font-size: 7.500px; fill: #3c9a58; }
.tb { fill: none; stroke: #3da95f; stroke-width: 1; }
svg .t-tb { font-family: "Noto Sans CJK SC", sans-serif; font-size: 8.500px; fill: #4fb36f; }
svg .t-ttl { font-family: "Noto Sans CJK SC", sans-serif; font-size: 11px; letter-spacing: 1px; fill: #4fb36f; }

.wm-arc { fill: none; stroke: #bdbdbd; stroke-width: 5; }
.wm-arc.thin { stroke-width: 2.500; }
svg .wm-mf { font: italic 700 30px "Liberation Sans", sans-serif; fill: #c9c9c9; letter-spacing: -3px; text-anchor: start; }
svg .wm-cn { font-family: "Noto Sans CJK SC", sans-serif; font-weight: 700; font-size: 33px; letter-spacing: 3px; fill: #b5b5b5; text-anchor: start; }
svg .wm-url { font: 700 12.500px "Liberation Sans", sans-serif; fill: #b5b5b5; text-anchor: start; }

/* Tabs */
.tabs {
  height: 15px;
  flex: none;
  display: flex;
  align-items: center;
  padding-left: 111px;
  background: #efeef0;
  font-size: 12px;
  line-height: 15px;
  overflow: hidden;
  color: #222;
}
.nav { display: flex; width: 55px; flex: none; }
.nb { width: 13.500px; font: 9px/15px "DejaVu Sans", sans-serif; color: #555; text-align: center; letter-spacing: -2px; }
.tab { flex: none; }
.active {
  width: 46px;
  height: 15px;
  background: #000;
  color: #fff;
  text-align: center;
  margin-right: 4px;
  clip-path: polygon(0 0, 100% 0, 82% 100%, 18% 100%);
}
.slash { flex: none; width: 15px; color: #555; text-align: center; font-family: "Liberation Sans", sans-serif; font-style: italic; }
```
